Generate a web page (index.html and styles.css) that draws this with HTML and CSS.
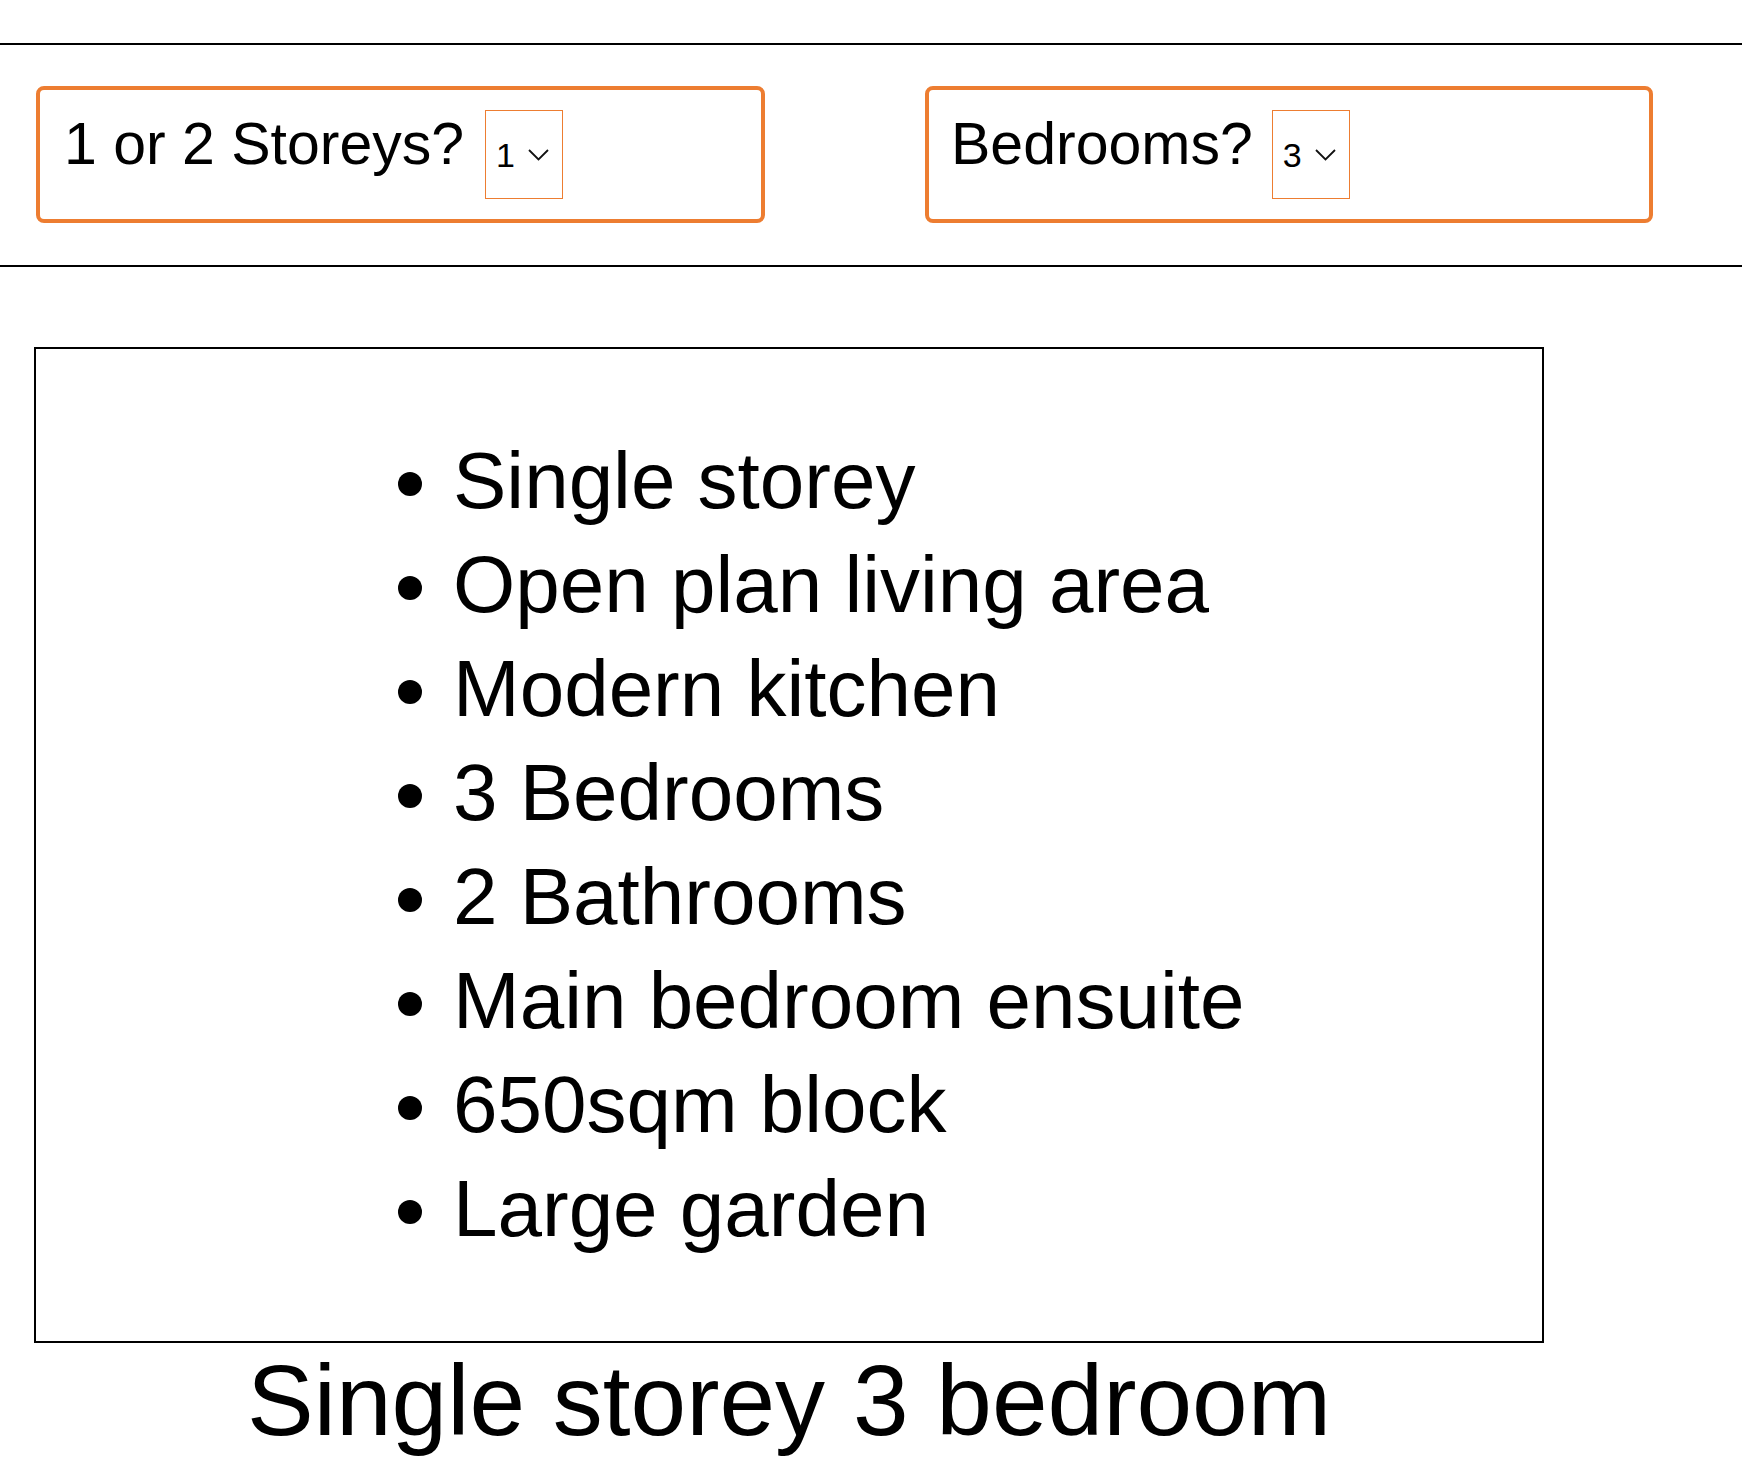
FILE: index.html
```html
<!DOCTYPE html>
<html lang="en">
<head>
<meta charset="utf-8">
<title>House finder</title>
<link rel="stylesheet" href="styles.css">
</head>
<body>
<hr class="rule rule-top">
<section class="controls">
  <div class="control control-storeys">
    <label class="control-label" for="storeys">1 or 2 Storeys?</label>
    <span class="select-wrap">
      <select id="storeys" class="select">
        <option selected>1</option>
        <option>2</option>
      </select>
      <svg class="chevron" width="21" height="12" viewBox="0 0 21 12" aria-hidden="true"><polyline points="1,1 10.5,10.5 20,1" fill="none" stroke="#111" stroke-width="1.8"/></svg>
    </span>
  </div>
  <div class="control control-bedrooms">
    <label class="control-label" for="bedrooms">Bedrooms?</label>
    <span class="select-wrap">
      <select id="bedrooms" class="select">
        <option>2</option>
        <option selected>3</option>
        <option>4</option>
      </select>
      <svg class="chevron" width="21" height="12" viewBox="0 0 21 12" aria-hidden="true"><polyline points="1,1 10.5,10.5 20,1" fill="none" stroke="#111" stroke-width="1.8"/></svg>
    </span>
  </div>
</section>
<hr class="rule">
<figure class="house">
  <div class="features">
    <ul class="feature-list">
      <li>Single storey</li>
      <li>Open plan living area</li>
      <li>Modern kitchen</li>
      <li>3 Bedrooms</li>
      <li>2 Bathrooms</li>
      <li>Main bedroom ensuite</li>
      <li>650sqm block</li>
      <li>Large garden</li>
    </ul>
  </div>
  <figcaption class="house-title">Single storey 3 bedroom</figcaption>
</figure>
</body>
</html>
```

FILE: styles.css
```css
html, body {
  margin: 0;
  padding: 0;
  background: #fff;
  color: #000;
  font-family: "Liberation Sans", Arial, sans-serif;
}

.rule {
  border: 0;
  border-top: 2px solid #000;
  margin: 0;
  height: 0;
}

.rule-top {
  margin-top: 43px;
}

.controls {
  display: flex;
  gap: 160px;
  padding: 41px 0 42px 36px;
}

.control {
  box-sizing: border-box;
  height: 137px;
  border: 4px solid #ed7d31;
  border-radius: 8px;
  padding: 20px 0 0;
  display: flex;
  align-items: flex-start;
}

.control-storeys {
  width: 729px;
  padding-left: 24px;
}

.control-bedrooms {
  width: 728px;
  padding-left: 22px;
}

.control-label {
  font-size: 59px;
  line-height: 59px;
  margin-top: 5px;
  margin-right: 21px;
}

.control-bedrooms .control-label {
  margin-right: 19px;
}

.select-wrap {
  position: relative;
  display: inline-block;
  height: 89px;
}

.select {
  appearance: none;
  -webkit-appearance: none;
  box-sizing: border-box;
  width: 78px;
  height: 89px;
  margin: 0;
  padding: 1px 0 0 10px;
  border: 1px solid #ed7d31;
  border-radius: 0;
  background: #fff;
  color: #000;
  font-family: "Liberation Sans", Arial, sans-serif;
  font-size: 34px;
  outline: none;
}

.chevron {
  position: absolute;
  left: 43px;
  top: 39px;
  pointer-events: none;
}

.house {
  margin: 80px 0 0 34px;
  width: 1510px;
}

.features {
  border: 2px solid #000;
}

.feature-list {
  margin: 80px 0;
  padding-left: 417px;
  font-size: 80px;
  line-height: 104px;
}

.house-title {
  margin: 0;
  text-align: center;
  font-size: 100px;
  line-height: normal;
}
```
